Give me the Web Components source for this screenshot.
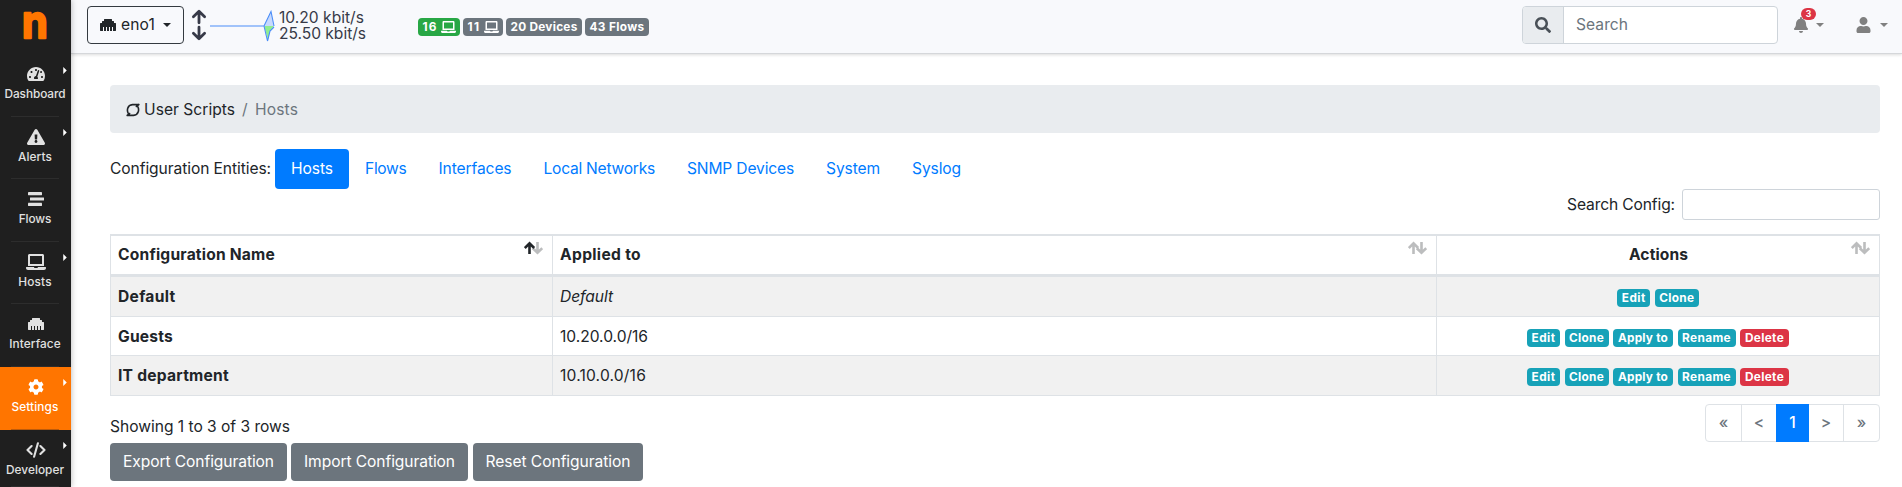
<!DOCTYPE html>
<html lang="en">
<head>
<meta charset="utf-8">
<title>User Scripts / Hosts</title>
<style>
html,body{margin:0;padding:0}
body{width:1902px;height:487px;overflow:hidden;background:#fff;color:#212529;font:440 15.6px/24px Inter,"Liberation Sans",sans-serif}
</style>
</head>
<body>
<nt-app></nt-app>
<script>
const define=(name,html,init)=>{
  const tpl=document.createElement('template');
  tpl.innerHTML=html;
  customElements.define(name,class extends HTMLElement{
    connectedCallback(){
      if(this.shadowRoot)return;
      this.attachShadow({mode:'open'}).append(tpl.content.cloneNode(true));
      if(init)init.call(this,this.shadowRoot);
    }
  });
};

const ICONS={
search:['0 0 512 512','<path d="M505 442.7L405.3 343c-4.5-4.5-10.6-7-17-7H372c27.6-35.3 44-79.7 44-128C416 93.1 322.9 0 208 0S0 93.1 0 208s93.1 208 208 208c48.3 0 92.7-16.4 128-44v16.3c0 6.4 2.5 12.5 7 17l99.7 99.7c9.4 9.4 24.6 9.4 33.9 0l28.3-28.3c9.4-9.4 9.4-24.6.1-34zM208 336c-70.7 0-128-57.2-128-128 0-70.7 57.2-128 128-128 70.7 0 128 57.2 128 128 0 70.7-57.2 128-128 128z"/>'],
user:['0 0 448 512','<path d="M224 256c70.7 0 128-57.3 128-128S294.7 0 224 0 96 57.3 96 128s57.3 128 128 128zm89.6 32h-16.7c-22.2 10.2-46.9 16-72.9 16s-50.6-5.8-72.9-16h-16.7C60.2 288 0 348.2 0 422.4V464c0 26.5 21.5 48 48 48h352c26.5 0 48-21.5 48-48v-41.6c0-74.2-60.2-134.4-134.4-134.4z"/>'],
bell:['0 0 448 512','<path d="M224 512c35.32 0 63.97-28.65 63.97-64H160.03c0 35.35 28.65 64 63.97 64zm215.39-149.71c-19.32-20.76-55.47-51.99-55.47-154.29 0-77.7-54.48-139.9-127.94-155.16V32c0-17.67-14.32-32-31.98-32s-31.98 14.33-31.98 32v20.84C118.56 68.1 64.08 130.3 64.08 208c0 102.3-36.15 133.53-55.47 154.29-6 6.45-8.66 14.16-8.61 21.71.11 16.4 12.98 32 32.1 32h383.8c19.12 0 32-15.6 32.1-32 .05-7.55-2.61-15.27-8.61-21.71z"/>'],
laptop:['0 0 640 512','<path d="M624 416H381.54c-.74 19.81-14.71 32-32.74 32H288c-18.69 0-33.02-17.47-32.77-32H16c-8.8 0-16 7.2-16 16v16c0 35.2 28.8 64 64 64h512c35.2 0 64-28.8 64-64v-16c0-8.8-7.2-16-16-16zM576 48c0-26.4-21.6-48-48-48H112C85.6 0 64 21.6 64 48v336h512V48zm-64 272H128V64h384v256z"/>'],
cog:['0 0 512 512','<path d="M487.4 315.7l-42.6-24.6c4.3-23.2 4.3-47 0-70.2l42.6-24.6c4.9-2.8 7.1-8.6 5.5-14-11.1-35.6-30-67.8-54.7-94.6-3.8-4.1-10-5.1-14.8-2.3L380.8 110c-17.9-15.4-38.5-27.3-60.8-35.1V25.8c0-5.6-3.9-10.5-9.4-11.7-36.7-8.2-74.3-7.8-109.2 0-5.5 1.2-9.4 6.1-9.4 11.7V75c-22.2 7.9-42.8 19.8-60.8 35.1L88.7 85.5c-4.9-2.8-11-1.9-14.8 2.3-24.7 26.7-43.6 58.9-54.7 94.6-1.7 5.4.6 11.2 5.5 14L67.3 221c-4.3 23.2-4.3 47 0 70.2l-42.6 24.6c-4.9 2.8-7.1 8.6-5.5 14 11.1 35.6 30 67.8 54.7 94.6 3.8 4.1 10 5.1 14.8 2.3l42.6-24.6c17.9 15.4 38.5 27.3 60.8 35.1v49.2c0 5.6 3.9 10.5 9.4 11.7 36.7 8.2 74.3 7.8 109.2 0 5.5-1.2 9.4-6.1 9.4-11.7v-49.2c22.2-7.9 42.8-19.8 60.8-35.1l42.6 24.6c4.9 2.8 11 1.9 14.8-2.3 24.7-26.7 43.6-58.9 54.7-94.6 1.5-5.5-.7-11.3-5.6-14.1zM256 336c-44.1 0-80-35.9-80-80s35.9-80 80-80 80 35.9 80 80-35.9 80-80 80z"/>'],
ethernet:['0 0 512 512','<path d="M496 192h-48v-48c0-8.8-7.2-16-16-16h-48V80c0-8.8-7.2-16-16-16H144c-8.8 0-16 7.2-16 16v48H80c-8.8 0-16 7.2-16 16v48H16c-8.8 0-16 7.2-16 16v224c0 8.8 7.2 16 16 16h80V320h32v128h64V320h32v128h64V320h32v128h64V320h32v128h80c8.8 0 16-7.2 16-16V208c0-8.8-7.2-16-16-16z"/>'],
alert:['0 0 576 512','<path d="M569.517 440.013C587.975 472.007 564.806 512 527.94 512H48.054c-36.937 0-59.999-40.055-41.577-71.987L246.423 23.985c18.467-32.009 64.72-31.951 83.154 0l239.94 416.028zM288 354c-25.405 0-46 20.595-46 46s20.595 46 46 46 46-20.595 46-46-20.595-46-46-46zm-43.673-165.346l7.418 136c.347 6.364 5.609 11.346 11.982 11.346h48.546c6.373 0 11.635-4.982 11.982-11.346l7.418-136c.375-6.874-5.098-12.654-11.982-12.654h-63.383c-6.884 0-12.356 5.78-11.981 12.654z"/>'],
flows:['0 0 16 16','<rect x="0" y="1" width="14" height="3.2" rx=".4"/><rect x="2" y="6.4" width="14" height="3.2" rx=".4"/><rect x="0" y="11.8" width="14" height="3.2" rx=".4"/>'],
code:['0 0 20 16','<g fill="none" stroke="currentColor" stroke-width="2.1" stroke-linecap="round" stroke-linejoin="round"><path d="M5.6 4L1.5 8l4.1 4M14.4 4l4.1 4-4.1 4M11.9 1.2L8.1 14.8"/></g>'],
gauge:['0 0 576 512','<path fill-rule="evenodd" d="M288 32C129 32 0 161 0 320c0 53 14 102 39 145 6 9 16 15 27 15h444c11 0 21-6 27-15 25-43 39-92 39-145C576 161 447 32 288 32zM288 96c18 0 32 14 32 32s-14 32-32 32-32-14-32-32 14-32 32-32zM96 384c-18 0-32-14-32-32s14-32 32-32 32 14 32 32-14 32-32 32zm48-160c-18 0-32-14-32-32s14-32 32-32 32 14 32 32-14 32-32 32zm247-66l-61 184c13 12 22 28 22 42 0 12-3 22-9 32H233c-6-10-9-20-9-32 0-34 27-62 61-64l61-177c4-12 18-19 30-15s19 18 15 30zm57 66c-15 0-27-10-31-24l14-35c5-3 11-5 17-5 18 0 32 14 32 32s-14 32-32 32zm32 160c-18 0-32-14-32-32s14-32 32-32 32 14 32 32-14 32-32 32z"/>'],
updown:['0 0 16 32','<g fill="none" stroke="currentColor" stroke-width="2.8" stroke-linecap="round" stroke-linejoin="round"><path d="M8 13.8V3M2.4 7.8L8 2.3l5.6 5.500M8 18.200v11M2.4 24.2L8 29.7l5.6-5.500"/></g>'],
scripts:['0 0 14 14','<g fill="none" stroke="currentColor" stroke-width="1.6" stroke-linecap="round"><path d="M2.6 11.2C.4 7.500 1.200 2 6.500 1.600H12.800M11.400 2.800C13.600 6.500 12.800 12 7.500 12.400H1.200M12.800 1.600L10.400 3.500M1.200 12.400L3.600 10.500"/></g>'],
spark:['0 0 66 32','<path fill="#c6d9fd" d="M54 16L61 1.500 64 16z"/><path fill="#90ee90" d="M54 16h10l-4 5-2 9z"/><path fill="none" stroke="#4a8df8" stroke-width="1.100" d="M0 16h54L61 1.500 64 16M54 16l3.500 15L60 21l4-4"/>'],
caret:['0 0 8 4','<path d="M0 0h8L4 4z"/>'],
side:['0 0 4 8','<path d="M0 0v8l4-4z"/>']
};

define('nt-icon','<style>:host{display:block;flex:none;line-height:0}svg{display:block;fill:currentColor}</style>',function(r){
  const [box,body]=ICONS[this.getAttribute('name')];
  r.innerHTML+=`<svg viewBox="${box}" width="${this.getAttribute('w')}" height="${this.getAttribute('h')}">${body}</svg>`;
});

/* Label tracked so that it occupies a given width. */
define('nt-text','<style>:host{display:inline-block;flex:none;white-space:pre;text-align:left}span{display:inline-block}</style><span><slot></slot></span>',function(r){
  const span=r.querySelector('span'),w=+this.getAttribute('w'),n=this.textContent.length;
  const fit=()=>{
    span.style.letterSpacing='0px';
    const nat=span.getBoundingClientRect().width;
    if(nat)span.style.letterSpacing=((w-nat)/n).toFixed(3)+'px';
  };
  this.style.width=w+'px';
  fit();
  requestAnimationFrame(fit);
});

define('nt-badge','<style>:host{display:flex;flex:none;align-items:center;justify-content:center;box-sizing:border-box;height:18px;border-radius:4px;background:var(--bg,#17a2b8);color:#fff;font-size:11.800px;font-weight:700;line-height:18px}</style><slot></slot>',function(){
  this.style.width=this.getAttribute('w')+'px';
});

define('nt-item',`<style>
:host{display:block;position:relative;box-sizing:border-box;height:62.600px;color:#e1e1e1}
:host([active]){background:#ff7500;color:#fff}
.in{display:flex;flex-direction:column;align-items:center;padding-top:10px;font-size:11.800px;font-weight:500;line-height:16px}
.ic{height:20px;display:flex;align-items:center;margin-bottom:2px}
.car{position:absolute;left:63px;top:12.500px;color:#fff}
.line{position:absolute;left:11px;right:12px;bottom:0;height:1px;background:#2d2d2d}
:host([active]) .line{background:#bd5b0b}
</style><div class="in"><div class="ic"><slot name="icon"></slot></div><slot></slot></div>`,function(r){
  if(this.hasAttribute('menu'))r.innerHTML+='<nt-icon class="car" name="side" w="4" h="7"></nt-icon>';
  r.innerHTML+='<div class="line"></div>';
});

define('nt-sidebar',`<style>
:host{display:block;width:71px;height:487px;background:#1f1f1f}
.logo{height:54px}
svg{display:block;overflow:visible}
nt-text{margin-right:1px}
</style>
<div class="logo"><svg width="71" height="54"><text x="0" y="0" transform="translate(34.800 37.800) scale(.9 1)" text-anchor="middle" font-family="Inter" font-weight="700" font-size="46" fill="#ff7500" stroke="#ff7500" stroke-width="2.400" stroke-linejoin="round">n</text></svg></div>
<nt-item menu><nt-icon slot="icon" name="gauge" w="18" h="16"></nt-icon><nt-text w="61">Dashboard</nt-text></nt-item>
<nt-item menu><nt-icon slot="icon" name="alert" w="18" h="16"></nt-icon><nt-text w="34">Alerts</nt-text></nt-item>
<nt-item><nt-icon slot="icon" name="flows" w="16" h="16"></nt-icon><nt-text w="32.500">Flows</nt-text></nt-item>
<nt-item menu><nt-icon slot="icon" name="laptop" w="20" h="16"></nt-icon><nt-text w="33.500">Hosts</nt-text></nt-item>
<nt-item><nt-icon slot="icon" name="ethernet" w="16" h="16"></nt-icon><nt-text w="51.500">Interface</nt-text></nt-item>
<nt-item menu active><nt-icon slot="icon" name="cog" w="16" h="16"></nt-icon><nt-text w="47">Settings</nt-text></nt-item>
<nt-item menu style="height:57px"><nt-icon slot="icon" name="code" w="20" h="16"></nt-icon><nt-text w="58">Developer</nt-text></nt-item>`);

define('nt-topbar',`<style>
:host{display:flex;box-sizing:border-box;height:54px;padding:6px 14px 0 16px;background:#f8f9fc;border-bottom:1px solid #d5d7da;box-shadow:0 1px 3px rgba(0,0,0,.14);align-items:flex-start}
.iface{display:flex;box-sizing:border-box;width:97px;height:38px;border:1px solid #343a40;border-radius:4px;align-items:center;padding-left:12px}
.ud{margin:3px 0 0 7px;color:#373a48}
.sp{margin:4px 0 0 3px}
.rate{margin:4px 0 0 3px;font-size:15.600px;line-height:16px;color:#373a48;width:86px}
.rate nt-text{display:block}
.badges{display:flex;gap:3px;margin:12px 0 0 53px}
.search{display:flex;box-sizing:border-box;width:256px;height:38px;margin-left:auto;border:1px solid #ced4da;border-radius:4px;background:#fff;overflow:hidden;align-items:center;color:#6c757d}
.pre{display:flex;box-sizing:border-box;width:41px;height:36px;align-items:center;justify-content:center;background:#e9ecef;border-right:1px solid #ced4da;color:#495057;margin-right:12px}
.bell,.user{display:flex;align-items:center;height:38px;color:#808080;position:relative}
.bell{margin-left:16px;gap:8px}
.user{margin-left:32px;gap:9px}
.cnt{position:absolute;left:7px;top:2px;width:15px;height:12px;border-radius:6px;background:#dc3545;color:#fff;font-size:8.500px;font-weight:700;line-height:12px;text-align:center}
</style>
<div class="iface"><nt-icon name="ethernet" w="16" h="16"></nt-icon><nt-text w="34" style="margin-left:5px">eno1</nt-text><nt-icon name="caret" w="8" h="4" style="margin-left:8px"></nt-icon></div>
<nt-icon class="ud" name="updown" w="16" h="32"></nt-icon>
<nt-icon class="sp" name="spark" w="66" h="32"></nt-icon>
<div class="rate"><nt-text w="85">10.20 kbit/s</nt-text><nt-text w="87">25.50 kbit/s</nt-text></div>
<div class="badges">
<nt-badge w="42" style="--bg:#28a745"><nt-text w="15">16</nt-text><nt-icon name="laptop" w="15" h="12" style="margin-left:3px"></nt-icon></nt-badge>
<nt-badge w="40" style="--bg:#6c757d"><nt-text w="13">11</nt-text><nt-icon name="laptop" w="15" h="12" style="margin-left:3px"></nt-icon></nt-badge>
<nt-badge w="76" style="--bg:#6c757d"><nt-text w="67">20 Devices</nt-text></nt-badge>
<nt-badge w="64" style="--bg:#6c757d"><nt-text w="55">43 Flows</nt-text></nt-badge>
</div>
<div class="search"><div class="pre"><nt-icon name="search" w="16" h="16"></nt-icon></div><nt-text w="52">Search</nt-text></div>
<div class="bell"><nt-icon name="bell" w="14" h="16"></nt-icon><nt-icon name="caret" w="8" h="4"></nt-icon><div class="cnt">3</div></div>
<div class="user"><nt-icon name="user" w="15" h="16"></nt-icon><nt-icon name="caret" w="8" h="4"></nt-icon></div>`);

define('nt-crumbs',`<style>
:host{display:flex;align-items:center;height:48px;background:#e9ecef;border-radius:4px;padding:1px 16px 0;box-sizing:border-box}
.sep{margin:0 6px 0 7px;color:#6c757d;width:7px}
.cur{color:#6c757d}
</style><nt-icon name="scripts" w="14" h="14" style="margin-right:4px"></nt-icon><nt-text w="91">User Scripts</nt-text><span class="sep">/</span><nt-text class="cur" w="43">Hosts</nt-text>`);

define('nt-tab','<style>:host{display:flex;align-items:center;height:40px;padding:0 16px;border-radius:4px;color:#007bff;box-sizing:border-box}:host([active]){background:#007bff;color:#fff}</style><slot></slot>');

define('nt-tabs',`<style>:host{display:flex;align-items:center;height:40px}</style>
<nt-text w="161" style="margin-right:4px">Configuration Entities:</nt-text>
<nt-tab active><nt-text w="42">Hosts</nt-text></nt-tab><nt-tab><nt-text w="41.500">Flows</nt-text></nt-tab><nt-tab><nt-text w="73">Interfaces</nt-text></nt-tab><nt-tab><nt-text w="111.500">Local Networks</nt-text></nt-tab><nt-tab><nt-text w="107">SNMP Devices</nt-text></nt-tab><nt-tab><nt-text w="54">System</nt-text></nt-tab><nt-tab><nt-text w="49">Syslog</nt-text></nt-tab>`);

define('nt-sort','<style>:host{display:block;position:absolute;right:9px;top:5px}svg{display:block}</style>',function(r){
  const a=this.hasAttribute('asc')?'#212529':'#bcbdbe';
  r.innerHTML+=`<svg width="19" height="14" fill="none" stroke-width="2.600"><path stroke="#bcbdbe" d="M13.500 1v11M8.800 7.200L13.500 11.800 18.200 7.200"/><path stroke="${a}" d="M5.500 13V2.500M.8 7L5.500 2.300 10.200 7"/></svg>`;
});

define('nt-cell',`<style>
:host{display:flex;align-items:center;position:relative;box-sizing:border-box;border-left:1px solid #dee2e6;padding:1px 7px 0 7px}
:host([center]){justify-content:center;border-right:1px solid #dee2e6;gap:5px;padding-top:3px}
:host([head][center]){padding-top:0}
:host([head]){font-weight:700;padding-top:0}
:host([strong]){font-weight:700}
</style><slot></slot>`);

define('nt-row',`<style>
:host{display:grid;grid-template-columns:442px 884px 444px;height:39px;box-sizing:border-box;border-bottom:1px solid #dee2e6}
:host([odd]){background:#f1f1f1}
:host([head]){height:43px;border-top:2px solid #dee2e6;border-bottom:3px solid #dee2e6}
</style><slot></slot>`);

const ACTIONS=[['Edit',33,24],['Clone',44,35],['Apply to',60,50],['Rename',58,49],['Delete',49,39]];
define('nt-actions','<style>:host{display:flex;gap:4.500px}</style>',function(r){
  const n=+this.getAttribute('count');
  r.innerHTML+=ACTIONS.slice(0,n).map(([t,w,tw])=>`<nt-badge w="${w}"${t==='Delete'?' style="--bg:#dc3545"':''}><nt-text w="${tw}">${t}</nt-text></nt-badge>`).join('');
});

define('nt-table',`<style>:host{display:block}</style>
<nt-row head><nt-cell head><nt-text w="157">Configuration Name</nt-text><nt-sort asc></nt-sort></nt-cell><nt-cell head><nt-text w="81">Applied to</nt-text><nt-sort></nt-sort></nt-cell><nt-cell head center><nt-text w="59" style="margin-left:1px">Actions</nt-text><nt-sort></nt-sort></nt-cell></nt-row>
<nt-row odd style="height:40px"><nt-cell strong><nt-text w="57.500">Default</nt-text></nt-cell><nt-cell><nt-text w="53" style="font-style:italic">Default</nt-text></nt-cell><nt-cell center><nt-actions count="2"></nt-actions></nt-cell></nt-row>
<nt-row><nt-cell strong><nt-text w="55">Guests</nt-text></nt-cell><nt-cell><nt-text w="88">10.20.0.0/16</nt-text></nt-cell><nt-cell center><nt-actions count="5"></nt-actions></nt-cell></nt-row>
<nt-row odd style="height:40px"><nt-cell strong><nt-text w="111">IT department</nt-text></nt-cell><nt-cell><nt-text w="86">10.10.0.0/16</nt-text></nt-cell><nt-cell center><nt-actions count="5"></nt-actions></nt-cell></nt-row>`);

define('nt-pager',`<style>
:host{display:flex;box-sizing:border-box;width:175px;height:38px;border:1px solid #dee2e6;border-radius:4px;color:#6c757d;font-weight:500}
span{box-sizing:border-box;text-align:center;line-height:36px;height:36px}
.on{margin:-1px 0;height:38px;line-height:37px;background:#007bff;color:#fff;width:33px}
</style><span style="width:36px;border-right:1px solid #dee2e6">«</span><span style="width:34px">&lt;</span><span class="on">1</span><span style="width:35px;border-right:1px solid #dee2e6">&gt;</span><span style="width:35px">»</span>`);

define('nt-button','<style>:host{display:flex;align-items:center;justify-content:center;height:38px;border-radius:4px;background:#6c757d;color:#fff}</style><slot></slot>',function(){
  this.style.width=this.getAttribute('w')+'px';
});

define('nt-main',`<style>
:host{display:block;padding:31px 22px 0 39px}
.filter{display:flex;justify-content:flex-end;align-items:center;height:31px;margin-bottom:14px}
.field{box-sizing:border-box;width:198px;height:31px;border:1px solid #ced4da;border-radius:3px;margin-left:7px}
.foot{display:flex;justify-content:space-between;height:48px;align-items:flex-start;padding-top:9px;box-sizing:border-box}
.foot nt-text{margin-top:11px}
.btns{display:flex;gap:4px}
</style>
<nt-crumbs></nt-crumbs>
<nt-tabs style="margin-top:16px"></nt-tabs>
<div class="filter"><nt-text w="108">Search Config:</nt-text><div class="field"></div></div>
<nt-table></nt-table>
<div class="foot" style="margin-top:-1px"><nt-text w="180">Showing 1 to 3 of 3 rows</nt-text><nt-pager></nt-pager></div>
<div class="btns"><nt-button w="177"><nt-text w="151">Export Configuration</nt-text></nt-button><nt-button w="177"><nt-text w="151">Import Configuration</nt-text></nt-button><nt-button w="170" style="margin-left:1px"><nt-text w="145">Reset Configuration</nt-text></nt-button></div>`);

define('nt-app',`<style>
:host{display:grid;grid-template-columns:71px 1fr;width:1902px;height:487px}
nt-sidebar{position:relative;z-index:1;box-shadow:0 0 6px rgba(0,0,0,.3)}
</style><nt-sidebar></nt-sidebar><div><nt-topbar></nt-topbar><nt-main></nt-main></div>`);
</script>
</body>
</html>
